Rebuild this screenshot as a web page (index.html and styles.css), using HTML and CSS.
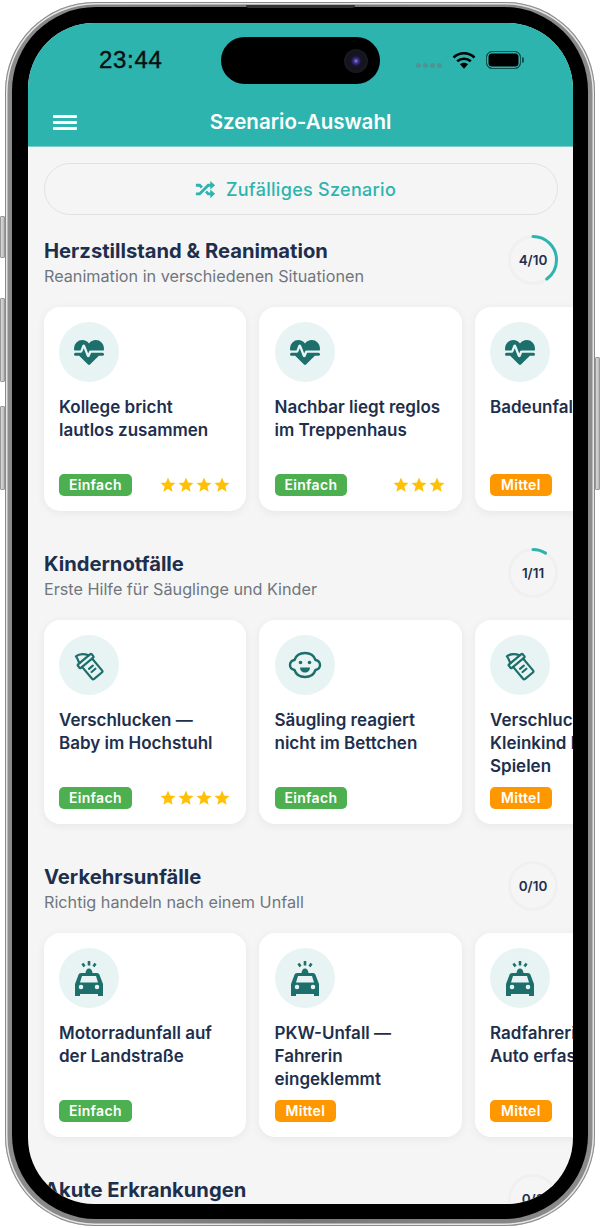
FILE: index.html
```html
<!DOCTYPE html>
<html lang="de">
<head>
    <meta charset="UTF-8">
    <meta name="viewport" content="width=device-width, initial-scale=1.0">
    <title>Szenario-Auswahl</title>
    <link rel="stylesheet" href="styles.css">
</head>
<body>

<!-- icon set -->
<svg class="icon-defs" aria-hidden="true">
    <symbol id="i-heart" viewBox="0 0 24 24">
        <path fill="currentColor" d="M7.5,4A5.5,5.5 0 0,0 2,9.5C2,10 2.09,10.5 2.22,11H6.3L7.57,7.63C7.87,6.83 9.05,6.75 9.43,7.63L11.5,13L12.09,11.58C12.22,11.25 12.57,11 13,11H21.78C21.91,10.5 22,10 22,9.5A5.5,5.5 0 0,0 16.5,4C14.64,4 13,4.93 12,6.34C11,4.93 9.36,4 7.5,4M3,12.5A1,1 0 0,0 2,13.5A1,1 0 0,0 3,14.5H5.44L11,20C12,20.9 12,20.9 13,20L18.56,14.5H21A1,1 0 0,0 22,13.5A1,1 0 0,0 21,12.5H13.4L12.47,14.8C12.07,15.81 10.92,15.67 10.55,14.83L8.5,9.5L7.54,11.83C7.39,12.21 7.05,12.5 6.6,12.5H3Z"/>
    </symbol>
    <symbol id="i-bottle" viewBox="0 0 36 36">
        <g transform="rotate(-40 18 18)" fill="none" stroke="currentColor" stroke-width="2.2" stroke-linejoin="round" stroke-linecap="round">
            <path d="M11.5 15v15.500c0 .8.700 1.500 1.500 1.500h10c.8 0 1.500-.7 1.500-1.500V15"/>
            <rect x="9" y="10.500" width="18" height="4.500" rx="1"/>
            <path d="M12 10.500c0-2.500 1.500-3.500 1.500-7.500 4 0 8 3 10.500 7.500"/>
            <path d="M15.500 21h5M15.500 25h5"/>
        </g>
    </symbol>
    <symbol id="i-baby" viewBox="0 0 36 36">
        <path fill="none" stroke="currentColor" stroke-width="2.4" stroke-linejoin="round" d="M18 6c5 0 9 2.500 10.500 7 2.800.6 4.500 2.700 4.500 5s-1.700 4.400-4.500 5C27 27.500 23 30 18 30s-9-2.500-10.500-7C4.700 22.400 3 20.300 3 18s1.700-4.400 4.500-5C9 8.500 13 6 18 6z"/>
        <circle cx="13.500" cy="15.500" r="1.800" fill="currentColor"/>
        <circle cx="22.500" cy="15.500" r="1.800" fill="currentColor"/>
        <path fill="currentColor" d="M13 20.500h10c0 3-2.300 5-5 5s-5-2-5-5z"/>
    </symbol>
    <symbol id="i-car" viewBox="0 0 36 36">
        <path fill="currentColor" fill-rule="evenodd" d="M10 13h16c1.200 0 2.100.7 2.500 1.800L32 24v11.500c0 .8-.6 1.500-1.400 1.500h-2.200c-.8 0-1.400-.7-1.400-1.500V34H9v1.500c0 .8-.6 1.500-1.400 1.500H5.400C4.600 37 4 36.300 4 35.500V24l3.500-9.200C7.900 13.700 8.800 13 10 13zM11 16l-2 6.500h18L25 16H11zM10 24.700a2.300 2.300 0 1 0 0 4.600 2.300 2.300 0 0 0 0-4.600zm16 0a2.300 2.300 0 1 0 0 4.600 2.300 2.300 0 0 0 0-4.600z"/>
        <path fill="currentColor" d="M14.500 13.500c0-3 1.500-5 3.500-5s3.500 2 3.500 5z"/>
        <path fill="none" stroke="currentColor" stroke-width="2.600" d="M18 1v4.500M11.500 3.500l2 3M24.500 3.500l-2 3"/>
    </symbol>
    <symbol id="i-star" viewBox="0 0 24 24">
        <path fill="currentColor" d="M12,17.27L18.18,21L16.54,13.97L22,9.24L14.81,8.62L12,2L9.19,8.62L2,9.24L7.45,13.97L5.82,21L12,17.27Z"/>
    </symbol>
    <symbol id="i-shuffle" viewBox="0 0 24 24">
        <path fill="currentColor" d="M17 3l5 4.500-5 4.500V9h-1.500l-9 9H2v-3h3.260l9-9H17V3zM2 6h4.500l2.820 2.820-2.120 2.120L5.260 9H2V6zM17 12l5 4.500-5 4.500v-3h-2.740l-2.820-2.820 2.120-2.120L15.500 15H17v-3z"/>
    </symbol>
</svg>

<div class="phone">
    <span class="side-btn side-btn-mute"></span>
    <span class="side-btn side-btn-up"></span>
    <span class="side-btn side-btn-down"></span>
    <span class="side-btn side-btn-power"></span>
    <span class="speaker"></span>

    <div class="bezel">
        <div class="screen">
            <div class="island"><span class="camera"></span></div>

            <header class="app-header">
                <div class="status-bar">
                    <span class="time">23:44</span>
                    <div class="status-icons">
                        <span class="signal"><i></i><i></i><i></i><i></i></span>
                        <svg class="wifi" width="24" height="18" viewBox="0 0 24 18">
                            <path fill="none" stroke="#000" stroke-width="2.600" d="M1.500 6.500c6-5.600 15-5.600 21 0M5.200 10.300c3.900-3.500 9.700-3.500 13.600 0"/>
                            <path d="M8 13.300c2.400-2 5.600-2 8 0l-4 4.500z"/>
                        </svg>
                        <span class="battery"></span>
                    </div>
                </div>
                <div class="toolbar">
                    <span class="menu-btn"><i></i><i></i><i></i></span>
                    <h1>Szenario-Auswahl</h1>
                </div>
            </header>

            <main class="content">
                <div class="random-btn">
                    <svg width="23" height="23"><use href="#i-shuffle"/></svg>
                    <span>Zufälliges Szenario</span>
                </div>

                <section class="category">
                    <div class="category-head">
                        <div class="category-title">
                            <h2>Herzstillstand &amp; Reanimation</h2>
                            <p>Reanimation in verschiedenen Situationen</p>
                        </div>
                        <div class="ring">
                            <svg width="50" height="50" viewBox="0 0 50 50">
                                <circle class="ring-track" cx="25" cy="25" r="23.500"/>
                                <circle class="ring-value" cx="25" cy="25" r="23.500" pathLength="100" stroke-dasharray="40 100"/>
                            </svg>
                            <span>4/10</span>
                        </div>
                    </div>
                    <div class="card-row">
                        <article class="card">
                            <div class="card-icon"><svg width="36" height="36"><use href="#i-heart"/></svg></div>
                            <h3>Kollege bricht<br>lautlos zusammen</h3>
                            <div class="card-foot">
                                <span class="badge easy">Einfach</span>
                                <span class="stars"><svg><use href="#i-star"/></svg><svg><use href="#i-star"/></svg><svg><use href="#i-star"/></svg><svg><use href="#i-star"/></svg></span>
                            </div>
                        </article>
                        <article class="card">
                            <div class="card-icon"><svg width="36" height="36"><use href="#i-heart"/></svg></div>
                            <h3>Nachbar liegt reglos<br>im Treppenhaus</h3>
                            <div class="card-foot">
                                <span class="badge easy">Einfach</span>
                                <span class="stars"><svg><use href="#i-star"/></svg><svg><use href="#i-star"/></svg><svg><use href="#i-star"/></svg></span>
                            </div>
                        </article>
                        <article class="card">
                            <div class="card-icon"><svg width="36" height="36"><use href="#i-heart"/></svg></div>
                            <h3>Badeunfall</h3>
                            <div class="card-foot">
                                <span class="badge medium">Mittel</span>
                            </div>
                        </article>
                    </div>
                </section>

                <section class="category">
                    <div class="category-head">
                        <div class="category-title">
                            <h2>Kindernotfälle</h2>
                            <p>Erste Hilfe für Säuglinge und Kinder</p>
                        </div>
                        <div class="ring">
                            <svg width="50" height="50" viewBox="0 0 50 50">
                                <circle class="ring-track" cx="25" cy="25" r="23.500"/>
                                <circle class="ring-value" cx="25" cy="25" r="23.500" pathLength="100" stroke-dasharray="9 100"/>
                            </svg>
                            <span>1/11</span>
                        </div>
                    </div>
                    <div class="card-row">
                        <article class="card">
                            <div class="card-icon"><svg width="36" height="36"><use href="#i-bottle"/></svg></div>
                            <h3>Verschlucken —<br>Baby im Hochstuhl</h3>
                            <div class="card-foot">
                                <span class="badge easy">Einfach</span>
                                <span class="stars"><svg><use href="#i-star"/></svg><svg><use href="#i-star"/></svg><svg><use href="#i-star"/></svg><svg><use href="#i-star"/></svg></span>
                            </div>
                        </article>
                        <article class="card">
                            <div class="card-icon"><svg width="36" height="36"><use href="#i-baby"/></svg></div>
                            <h3>Säugling reagiert<br>nicht im Bettchen</h3>
                            <div class="card-foot">
                                <span class="badge easy">Einfach</span>
                            </div>
                        </article>
                        <article class="card">
                            <div class="card-icon"><svg width="36" height="36"><use href="#i-bottle"/></svg></div>
                            <h3>Verschlucken —<br>Kleinkind beim<br>Spielen</h3>
                            <div class="card-foot">
                                <span class="badge medium">Mittel</span>
                            </div>
                        </article>
                    </div>
                </section>

                <section class="category">
                    <div class="category-head">
                        <div class="category-title">
                            <h2>Verkehrsunfälle</h2>
                            <p>Richtig handeln nach einem Unfall</p>
                        </div>
                        <div class="ring">
                            <svg width="50" height="50" viewBox="0 0 50 50">
                                <circle class="ring-track" cx="25" cy="25" r="23.500"/>
                            </svg>
                            <span>0/10</span>
                        </div>
                    </div>
                    <div class="card-row">
                        <article class="card">
                            <div class="card-icon"><svg width="36" height="36"><use href="#i-car"/></svg></div>
                            <h3>Motorradunfall auf<br>der Landstraße</h3>
                            <div class="card-foot">
                                <span class="badge easy">Einfach</span>
                            </div>
                        </article>
                        <article class="card">
                            <div class="card-icon"><svg width="36" height="36"><use href="#i-car"/></svg></div>
                            <h3>PKW-Unfall —<br>Fahrerin<br>eingeklemmt</h3>
                            <div class="card-foot">
                                <span class="badge medium">Mittel</span>
                            </div>
                        </article>
                        <article class="card">
                            <div class="card-icon"><svg width="36" height="36"><use href="#i-car"/></svg></div>
                            <h3>Radfahrerin vom<br>Auto erfasst</h3>
                            <div class="card-foot">
                                <span class="badge medium">Mittel</span>
                            </div>
                        </article>
                    </div>
                </section>

                <section class="category">
                    <div class="category-head">
                        <div class="category-title">
                            <h2>Akute Erkrankungen</h2>
                            <p>Plötzliche Beschwerden erkennen</p>
                        </div>
                        <div class="ring">
                            <svg width="50" height="50" viewBox="0 0 50 50">
                                <circle class="ring-track" cx="25" cy="25" r="23.500"/>
                            </svg>
                            <span>0/8</span>
                        </div>
                    </div>
                </section>
            </main>
        </div>
    </div>
</div>

</body>
</html>
```

FILE: styles.css
```css
:root {
    --teal: #2db4ae;
    --teal-dark: #1c6f6b;
    --bg-color: #f5f5f5;
    --navy: #1e2f4d;
    --grey-text: #70767d;
}

* {
    margin: 0;
    padding: 0;
    box-sizing: border-box;
}

html, body {
    height: 100%;
    overflow: hidden;
}

body {
    background: white;
    font-family: Inter, 'Noto Sans', sans-serif;
    padding: 2px 5px;
}

.icon-defs {
    display: none;
}

/* device frame */
.phone {
    position: relative;
    width: 590px;
    height: 1224px;
    padding: 5px 7px 7px;
    border-radius: 90px;
    background: linear-gradient(90deg, #8c8c8c, #777 50%, #8c8c8c);
    box-shadow: inset 0 0 0 1px #8a8a8a, inset 0 0 0 2.5px #e6e6e6;
}

.bezel {
    height: 100%;
    padding: 16px 15px 15px 16px;
    border-radius: 84px;
    background: black;
}

.side-btn {
    position: absolute;
    width: 5px;
    background: linear-gradient(90deg, #d8d8d8, #bbb);
    border: 1px solid #999;
    border-radius: 1px;
}

.side-btn-mute { left: -5px; top: 214px; height: 42px; }
.side-btn-up { left: -5px; top: 296px; height: 84px; }
.side-btn-down { left: -5px; top: 404px; height: 84px; }
.side-btn-power { right: -5px; top: 355px; height: 133px; }

.speaker {
    position: absolute;
    top: 3px;
    left: 241px;
    width: 109px;
    height: 3px;
    background: #333;
    border-radius: 0 0 4px 4px;
}

.screen {
    position: relative;
    height: 100%;
    overflow: hidden;
    border-radius: 66px;
    background: var(--bg-color);
}

.island {
    position: absolute;
    top: 14px;
    left: 193px;
    width: 159px;
    height: 47px;
    border-radius: 24px;
    background: black;
    z-index: 2;
}

.camera {
    position: absolute;
    top: 12px;
    right: 12px;
    width: 24px;
    height: 24px;
    border-radius: 50%;
    background: radial-gradient(circle, #8f86d0 0, #3a2f8a 14%, #17142e 30%, #14141a 48%, #202026 100%);
}

/* header */
.app-header {
    background: var(--teal);
    height: 124px;
    border-bottom: 1px solid #7fcdc9;
}

.status-bar {
    height: 74px;
    display: flex;
    justify-content: space-between;
    padding: 23px 52px 0 71px;
}

.time {
    font-family: 'Liberation Sans', sans-serif;
    font-size: 24px;
    line-height: 28px;
    letter-spacing: 0.7px;
    color: #0a0f0f;
    -webkit-text-stroke: 0.4px #0a0f0f;
}

.status-icons {
    display: flex;
    align-items: flex-start;
    gap: 10px;
    padding-top: 5px;
}

.signal {
    display: flex;
    gap: 2px;
    margin-top: 12px;
}

.signal i {
    width: 5px;
    height: 5px;
    border-radius: 50%;
    background: #4f9492;
}

.battery {
    position: relative;
    width: 35px;
    height: 18px;
    border-radius: 6px;
    border: 1px solid #0d5551;
    box-shadow: inset 0 0 0 1.5px var(--teal);
    background: black;
}

.battery::after {
    content: '';
    position: absolute;
    right: -4px;
    top: 5px;
    width: 2px;
    height: 6px;
    border-radius: 0 2px 2px 0;
    background: #0d5551;
}

.toolbar {
    position: relative;
    height: 49px;
    display: flex;
    align-items: center;
    justify-content: center;
}

.toolbar h1 {
    color: white;
    font-size: 20.5px;
    font-weight: 600;
}

.menu-btn {
    position: absolute;
    left: 25px;
    top: 18px;
    width: 24px;
    display: flex;
    flex-direction: column;
    gap: 3px;
}

.menu-btn i {
    height: 3px;
    border-radius: 1px;
    background: white;
}

/* content */
.content {
    padding: 16px 0 0 16px;
}

.random-btn {
    width: 514px;
    height: 52px;
    padding-right: 12px;
    display: flex;
    align-items: center;
    justify-content: center;
    gap: 9px;
    border: 1px solid #dfe2e3;
    border-radius: 26px;
    color: var(--teal);
    font-size: 18px;
    font-weight: 500;
    letter-spacing: 0.3px;
    margin-bottom: 20px;
}

.category {
    margin-bottom: 37px;
}

.category-head {
    height: 50px;
    width: 514px;
    display: flex;
    align-items: center;
    justify-content: space-between;
    margin-bottom: 22px;
}

.category-title {
    padding-top: 5px;
}

.category-head h2 {
    color: var(--navy);
    font-size: 20.2px;
    line-height: 26px;
    font-weight: 700;
}

.category-head p {
    color: var(--grey-text);
    font-size: 16.2px;
    line-height: 24px;
}

.ring {
    position: relative;
    width: 50px;
    height: 50px;
    display: flex;
    align-items: center;
    justify-content: center;
}

.ring svg {
    position: absolute;
    inset: 0;
    transform: rotate(-90deg);
}

.ring circle {
    fill: none;
    stroke-width: 3;
}

.ring-track {
    stroke: #f0f0f0;
}

.ring-value {
    stroke: var(--teal);
    stroke-linecap: round;
}

.ring span {
    position: relative;
    color: var(--navy);
    font-size: 13.5px;
    font-weight: 600;
}

.card-row {
    display: flex;
    gap: 13px;
    width: 560px;
    margin-left: -0.5px;
}

.card {
    flex: 0 0 202.5px;
    height: 204px;
    padding: 15px 15.5px;
    display: flex;
    flex-direction: column;
    background: white;
    border-radius: 16px;
    box-shadow: 0 2px 10px rgba(0, 0, 0, 0.06);
}

.card-icon {
    width: 60px;
    height: 60px;
    flex: none;
    display: flex;
    align-items: center;
    justify-content: center;
    border-radius: 50%;
    background: #e8f4f4;
    color: var(--teal-dark);
}

.card h3 {
    margin-top: 13.5px;
    color: var(--navy);
    font-size: 17px;
    line-height: 23px;
    font-weight: 600;
    white-space: nowrap;
}

.card-foot {
    margin-top: auto;
    display: flex;
    align-items: center;
    justify-content: space-between;
}

.badge {
    height: 22px;
    padding: 0 10px 1px;
    display: flex;
    align-items: center;
    border-radius: 5px;
    color: white;
    font-size: 14px;
    font-weight: 600;
    letter-spacing: 0.3px;
}

.badge.easy { background: #4caf50; }
.badge.medium { background: #ff9800; padding: 0 11px 1px; }

.stars {
    display: flex;
    color: #ffc107;
}

.stars svg {
    width: 18px;
    height: 18px;
}
```
